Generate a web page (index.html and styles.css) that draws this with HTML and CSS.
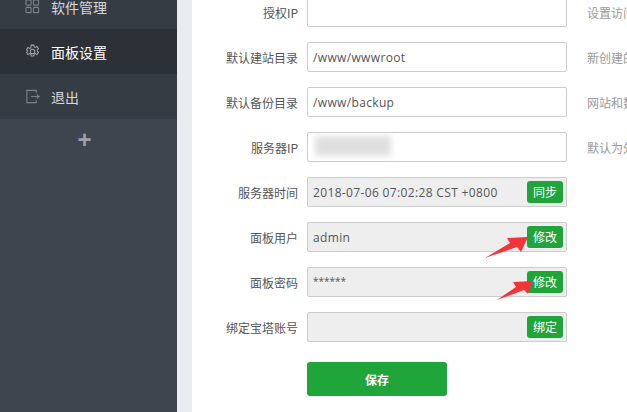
FILE: index.html
```html
<!DOCTYPE html>
<html lang="zh-CN">
<head>
<meta charset="utf-8">
<title>面板设置</title>
<link rel="stylesheet" href="styles.css">
</head>
<body>
<div class="page">
  <aside class="sidebar">
    <nav class="menu">
      <a class="item">
        <svg class="ico" viewBox="0 0 16 16" fill="none" stroke="#7c8288" stroke-width="1.2"><rect x="1" y="1" width="5.5" height="5.5" rx="1"/><rect x="9" y="1" width="5.5" height="5.5" rx="1"/><rect x="1" y="9" width="5.5" height="5.5" rx="1"/><rect x="9" y="9" width="5.5" height="5.5" rx="1"/></svg>
        <span>软件管理</span>
      </a>
      <a class="item active">
        <svg class="ico" viewBox="0 0 16 16" fill="none" stroke="#a4a8ac" stroke-width="1.1"><path d="M6.6 1.2h2.8l.4 1.9 1.3.6 1.7-1 1.6 2.4-1.3 1.3v1.2l1.3 1.3-1.6 2.4-1.7-1-1.3.6-.4 1.9H6.6l-.4-1.9-1.3-.6-1.7 1-1.6-2.4 1.3-1.3V7.4L1.6 6.1l1.6-2.4 1.7 1 1.3-.6z"/><circle cx="8" cy="8" r="2.4"/></svg>
        <span>面板设置</span>
      </a>
      <a class="item">
        <svg class="ico" viewBox="0 0 16 16" fill="none" stroke="#7c8288" stroke-width="1.2"><path d="M12 4V1.5H2v13h10V12"/><path d="M6.5 8H15M12.5 5.8 15 8l-2.5 2.2"/></svg>
        <span>退出</span>
      </a>
    </nav>
    <div class="add">+</div>
  </aside>
  <div class="gutter"></div>
  <main class="content">
    <form class="form">
      <div class="row"><label class="lab">授权IP</label><div class="field"></div><p class="hint">设置访问授权IP</p></div>
      <div class="row"><label class="lab">默认建站目录</label><div class="field">/www/wwwroot</div><p class="hint">新创建的网站默认目录</p></div>
      <div class="row"><label class="lab">默认备份目录</label><div class="field">/www/backup</div><p class="hint">网站和数据库备份目录</p></div>
      <div class="row"><label class="lab">服务器IP</label><div class="field"><span class="blur"></span></div><p class="hint">默认为外网IP</p></div>
      <div class="row"><label class="lab">服务器时间</label><div class="field off">2018-07-06 07:02:28 CST +0800<button type="button" class="mini">同步</button></div></div>
      <div class="row"><label class="lab">面板用户</label><div class="field off">admin<button type="button" class="mini">修改</button>
        <svg class="arrow" viewBox="0 0 46 24"><path d="M0 22 25 7 22 2 43 1 36 16 32 11z" fill="#f5333a"/></svg></div></div>
      <div class="row"><label class="lab">面板密码</label><div class="field off stars">******<button type="button" class="mini">修改</button>
        <svg class="arrow two" viewBox="0 0 36 20"><path d="M0 20 19 7 16 2 36 1 31 14 27 10z" fill="#f5333a"/></svg></div></div>
      <div class="row"><label class="lab">绑定宝塔账号</label><div class="field off"><button type="button" class="mini">绑定</button></div></div>
      <div class="row save"><button type="button" class="savebtn">保存</button></div>
    </form>
  </main>
</div>
</body>
</html>
```

FILE: styles.css
```css
* { box-sizing: border-box; }
html, body { margin: 0; height: 100%; overflow: hidden; background: #fff; }
body { font-family: "Noto Sans CJK SC", "Open Sans", sans-serif; font-size: 13px; color: #555; }
.page { display: flex; height: 412px; overflow: hidden; }

.sidebar { width: 177px; flex: none; background: #3e454e; }
.menu { margin-top: -16px; }
.item { display: flex; align-items: center; height: 45px; padding-left: 25px; background: #363c44; color: #d6d8da; font-size: 14px; }
.item.active { background: #2c3037; color: #fff; }
.ico { width: 15px; height: 15px; margin-right: 11px; flex: none; }
.add { height: 42px; padding-right: 8px; display: flex; align-items: center; justify-content: center; color: #9da1a5; font-size: 24px; line-height: 1; font-family: "Liberation Sans", sans-serif; font-weight: bold; }

.gutter { width: 15px; flex: none; background: #e9ecf0; }
.content { flex: 1; min-width: 0; overflow: hidden; }
.form { margin: -3px 0 0; }

.row { display: flex; align-items: center; height: 30px; margin-bottom: 15px; white-space: nowrap; }
.lab { width: 106px; margin-right: 9px; text-align: right; font-size: 12px; color: #555; flex: none; }
.field { position: relative; width: 260px; height: 30px; flex: none; padding-left: 5px; line-height: 29px; border: 1px solid #ccc; border-radius: 2px; background: #fff; color: #555; font-family: "Open Sans", "Noto Sans", sans-serif; font-size: 12px; letter-spacing: .35px; }
.off { background: #eee; }
.stars { font-size: 10px; letter-spacing: 0; line-height: 27px; }
.hint { margin: 0 0 0 20px; font-size: 12px; color: #999; }

.mini { position: absolute; right: 3px; top: 3px; width: 36px; height: 22px; padding: 0; border: 0; border-radius: 3px; background: #20a53a; color: #fff; font-family: "Noto Sans CJK SC", sans-serif; font-size: 12px; line-height: 22px; letter-spacing: 0; }
.blur { position: absolute; left: 7px; top: 3px; width: 76px; height: 20px; background: #dfdfdf; filter: blur(3px); }
.arrow { position: absolute; left: 177px; top: 13px; width: 46px; height: 24px; }
.arrow.two { left: 189px; top: 12px; width: 36px; height: 20px; }

.save { height: 34px; margin-top: 20px; padding-left: 115px; }
.savebtn { width: 140px; height: 34px; padding: 0; border: 0; border-radius: 3px; background: #20a53a; color: #fff; font-family: "Noto Sans CJK SC", sans-serif; font-size: 12px; font-weight: bold; }
```
